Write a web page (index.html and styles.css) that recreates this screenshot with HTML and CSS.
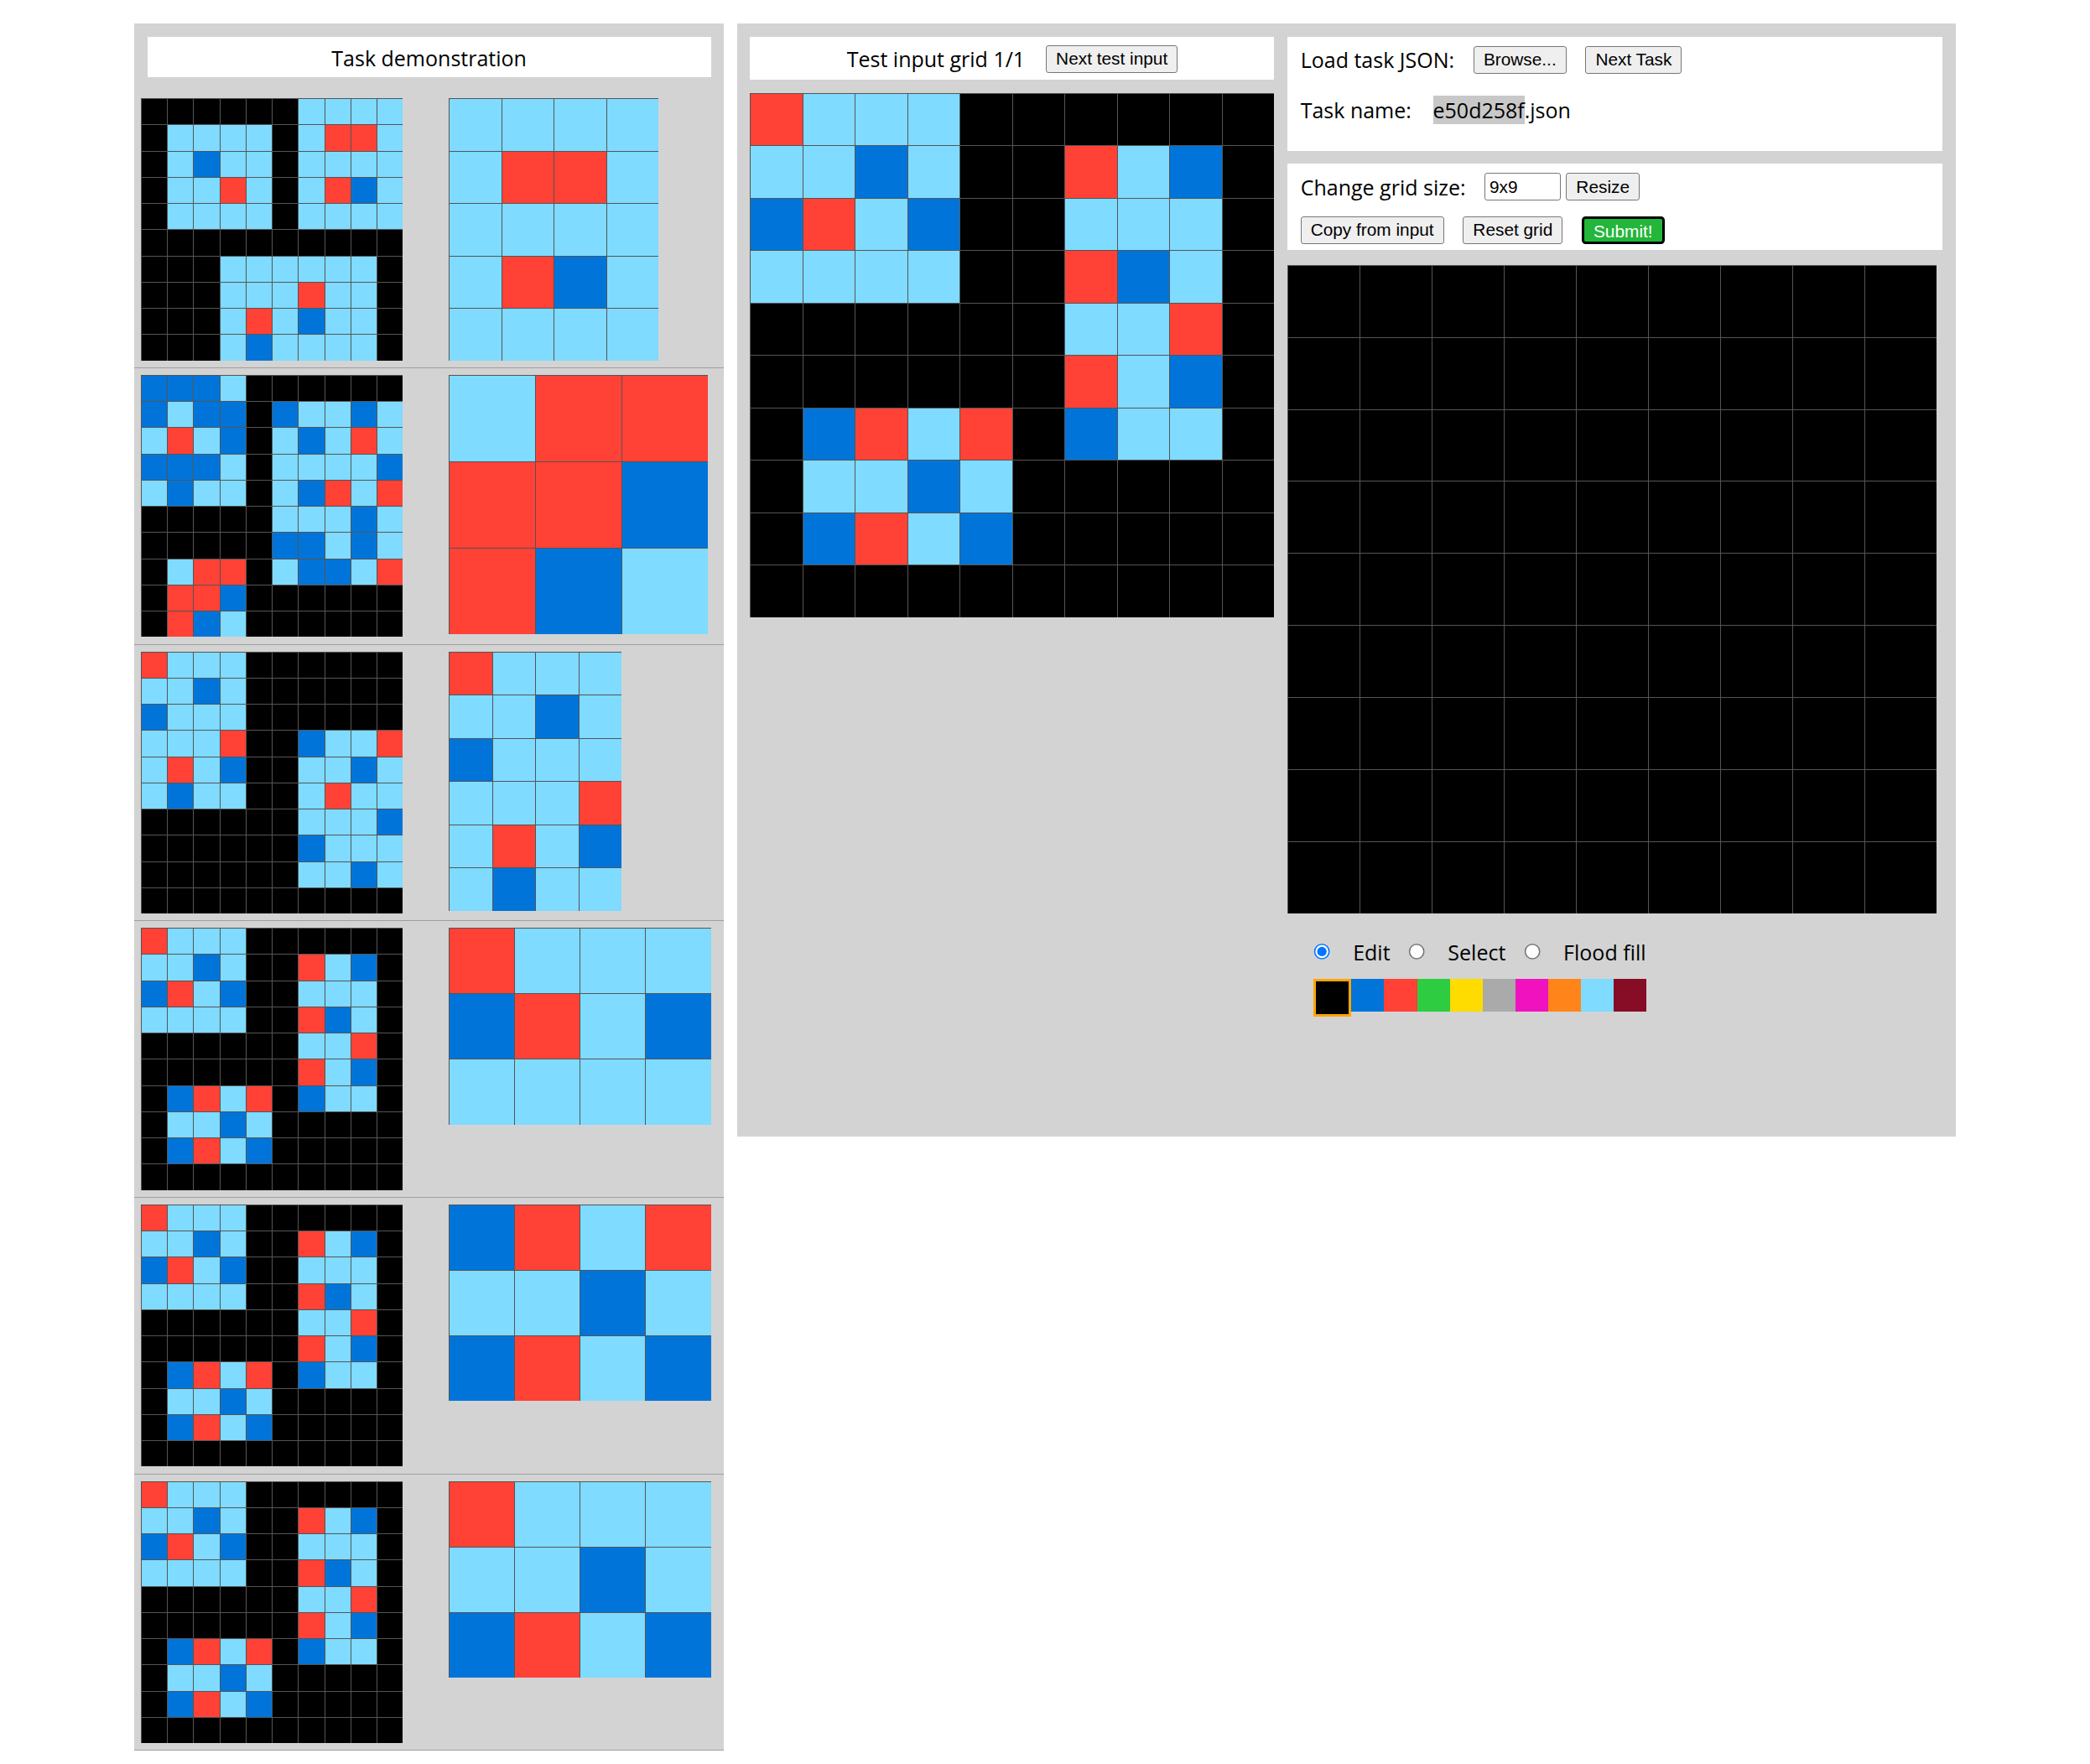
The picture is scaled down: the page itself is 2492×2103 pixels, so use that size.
FILE: index.html
```html
<!DOCTYPE html>
<html lang="en">
<head>
<meta charset="utf-8">
<title>ARC testing interface</title>
<link rel="stylesheet" href="styles.css">
</head>
<body>
<div class="workspace">
  <section class="demo-panel">
    <div class="panel-header">Task demonstration</div>
    <div class="pair">
      <div class="grid" data-grid="p1i" data-box="200"></div>
      <div class="grid" data-grid="p1o" data-box="200"></div>
    </div>
    <div class="pair">
      <div class="grid" data-grid="p2i" data-box="200"></div>
      <div class="grid" data-grid="p2o" data-box="200"></div>
    </div>
    <div class="pair">
      <div class="grid" data-grid="p3i" data-box="200"></div>
      <div class="grid" data-grid="p3o" data-box="200"></div>
    </div>
    <div class="pair">
      <div class="grid" data-grid="p4i" data-box="200"></div>
      <div class="grid" data-grid="p4o" data-box="200"></div>
    </div>
    <div class="pair">
      <div class="grid" data-grid="p4i" data-box="200"></div>
      <div class="grid" data-grid="p5o" data-box="200"></div>
    </div>
    <div class="pair">
      <div class="grid" data-grid="p4i" data-box="200"></div>
      <div class="grid" data-grid="p6o" data-box="200"></div>
    </div>
  </section>

  <section class="test-panel">
    <div class="test-col">
      <div class="panel-header test-header">
        <span>Test input grid 1/1</span>
        <button class="btn next-test">Next test input</button>
      </div>
      <div class="grid" data-grid="p4i" data-box="400"></div>
    </div>

    <div class="edit-col">
      <div class="box loader">
        <div class="row">
          <span class="load-label">Load task JSON:</span>
          <button class="btn">Browse...</button>
          <button class="btn gap-btn">Next Task</button>
        </div>
        <div class="row name-row">
          <span class="name-label">Task name:</span>
          <span class="task-file"><span class="sel">e50d258f</span>.json</span>
        </div>
      </div>

      <div class="box resizer">
        <div class="row">
          <span class="size-label">Change grid size:</span>
          <input class="size-input" type="text" value="9x9">
          <button class="btn resize-btn">Resize</button>
        </div>
        <div class="row btn-row">
          <button class="btn">Copy from input</button>
          <button class="btn gap-btn">Reset grid</button>
          <button class="btn gap-btn submit">Submit!</button>
        </div>
      </div>

      <div class="grid" data-grid="out" data-box="500"></div>

      <div class="tools">
        <label class="tool"><input type="radio" name="tool" checked><span>Edit</span></label>
        <label class="tool"><input type="radio" name="tool"><span>Select</span></label>
        <label class="tool"><input type="radio" name="tool"><span>Flood fill</span></label>
      </div>

      <div class="palette">
        <div class="swatch c0 selected"></div>
        <div class="swatch c1"></div>
        <div class="swatch c2"></div>
        <div class="swatch c3"></div>
        <div class="swatch c4"></div>
        <div class="swatch c5"></div>
        <div class="swatch c6"></div>
        <div class="swatch c7"></div>
        <div class="swatch c8"></div>
        <div class="swatch c9"></div>
      </div>
    </div>
  </section>
</div>
<script src="script.js"></script>
</body>
</html>
```

FILE: styles.css
```css
html {
  zoom: 1.5625;
}

body {
  margin: 8px 8px 0;
  background: #ffffff;
  color: #000000;
  font-family: "Open Sans", "Noto Sans", sans-serif;
  font-size: 16px;
}

.workspace {
  display: flex;
  justify-content: center;
  align-items: flex-start;
  gap: 10px;
  padding-top: 10px;
}

/* ---------- demonstration column ---------- */
.demo-panel {
  width: 450px;
  background: #d3d3d3;
}

.panel-header {
  margin: 10px 10px 11px;
  height: 31px;
  box-sizing: border-box;
  padding-top: 1px;
  background: #ffffff;
  display: flex;
  align-items: center;
  justify-content: center;
  font-size: 16px;
}

.pair {
  display: flex;
  align-items: flex-start;
  gap: 35px;
  padding: 5px 5px 5.35px;
  border-bottom: 1px solid #9f9f9f;
}

/* ---------- grids ---------- */
.grid {
  display: grid;
  flex: none;
}

.cell {
  box-sizing: border-box;
  border-left: 1px solid #555555;
  border-top: 1px solid #555555;
}

.c0 { background: #000000; }
.c1 { background: #0074d9; }
.c2 { background: #ff4136; }
.c3 { background: #2ecc40; }
.c4 { background: #ffdc00; }
.c5 { background: #aaaaaa; }
.c6 { background: #f012be; }
.c7 { background: #ff851b; }
.c8 { background: #7fdbff; }
.c9 { background: #870c25; }

/* ---------- test / editor panel ---------- */
.test-panel {
  width: 930px;
  height: 849px;
  box-sizing: border-box;
  padding: 10px;
  background: #d3d3d3;
  display: flex;
  align-items: flex-start;
  gap: 10px;
}

.test-col {
  width: 400px;
}

.test-header {
  margin: 0 0 10px;
  height: 33px;
  padding-top: 0;
}

.next-test {
  margin: 1px 0 0 16px;
}

.edit-col {
  width: 500px;
}

.box {
  background: #ffffff;
  box-sizing: border-box;
  padding: 7px 10px 0;
}

.loader {
  height: 87px;
  margin-bottom: 10px;
}

.resizer {
  height: 66px;
  margin-bottom: 11px;
}

.row {
  display: flex;
  align-items: center;
  height: 21px;
  white-space: nowrap;
}

.name-row {
  margin-top: 17px;
  height: 22px;
}

.btn-row {
  margin-top: 12px;
}

.load-label {
  width: 132px;
  flex: none;
}

.name-label {
  width: 101px;
  flex: none;
}

.size-label {
  width: 140.5px;
  flex: none;
}

.sel {
  background: #c8c8c8;
}

.btn {
  box-sizing: border-box;
  height: 21px;
  padding: 0 7px;
  border: 1px solid #767676;
  border-radius: 2px;
  background: #efefef;
  color: #000000;
  font-family: "Liberation Sans", Arial, sans-serif;
  font-size: 13.333px;
  line-height: 19px;
  flex: none;
}

.gap-btn {
  margin-left: 14.6px;
}

.resize-btn {
  margin-left: 4.2px;
}

.submit {
  border: 2px solid #000000;
  border-radius: 3px;
  background: #22b63a;
  color: #ffffff;
  padding: 0 7px;
}

.size-input {
  box-sizing: border-box;
  width: 58px;
  height: 21px;
  margin: 0;
  padding: 1px 3px;
  border: 1px solid #767676;
  border-radius: 2px;
  font-family: "Liberation Sans", Arial, sans-serif;
  font-size: 13.333px;
  color: #000000;
  background: #ffffff;
}

/* ---------- tools & palette ---------- */
.tools {
  display: flex;
  align-items: center;
  height: 22px;
  margin-top: 18.5px;
  padding-left: 20px;
}

.tool {
  display: flex;
  align-items: center;
  margin-right: 14px;
  line-height: 22px;
}

.tool input {
  width: 13px;
  height: 13px;
  margin: 0 17px 0 0;
}

.palette {
  display: flex;
  align-items: flex-start;
  margin-top: 9.5px;
  padding-left: 20px;
}

.swatch {
  width: 25px;
  height: 25px;
  flex: none;
}

.swatch.selected {
  border: 2px solid #ffa500;
}
```

FILE: script.js
```js
var GRIDS = {
  p1i: ["0000008888", "0888808228", "0818808888", "0882808218", "0888808888",
        "0000000000", "0008888880", "0008882880", "0008281880", "0008188880"],
  p1o: ["8888", "8228", "8888", "8218", "8888"],
  p2i: ["1118000000", "1811018818", "8281081828", "1118088881", "8188081282",
        "0000088818", "0000011818", "0822081182", "0221000000", "0218000000"],
  p2o: ["822", "221", "218"],
  p3i: ["2888000000", "8818000000", "1888000000", "8882001882", "8281008818",
        "8188008288", "0000008881", "0000001888", "0000008818", "0000000000"],
  p3o: ["2888", "8818", "1888", "8882", "8281", "8188"],
  p4i: ["2888000000", "8818002810", "1281008880", "8888002180", "0000008820",
        "0000002810", "0128201880", "0881800000", "0128100000", "0000000000"],
  p4o: ["2888", "1281", "8888"],
  p5o: ["1282", "8818", "1281"],
  p6o: ["2888", "8818", "1281"],
  out: ["000000000", "000000000", "000000000", "000000000", "000000000",
        "000000000", "000000000", "000000000", "000000000"]
};

document.querySelectorAll("[data-grid]").forEach(function (el) {
  var rows = GRIDS[el.getAttribute("data-grid")];
  var box = parseInt(el.getAttribute("data-box"), 10);
  var h = rows.length;
  var w = rows[0].length;
  var cell = Math.min(Math.floor((box - h) / h), Math.floor((box - w) / w)) + 1;
  el.style.gridTemplateColumns = "repeat(" + w + ", " + cell + "px)";
  el.style.gridAutoRows = cell + "px";
  rows.forEach(function (row) {
    for (var i = 0; i < row.length; i++) {
      var c = document.createElement("div");
      c.className = "cell c" + row.charAt(i);
      el.appendChild(c);
    }
  });
});
```
